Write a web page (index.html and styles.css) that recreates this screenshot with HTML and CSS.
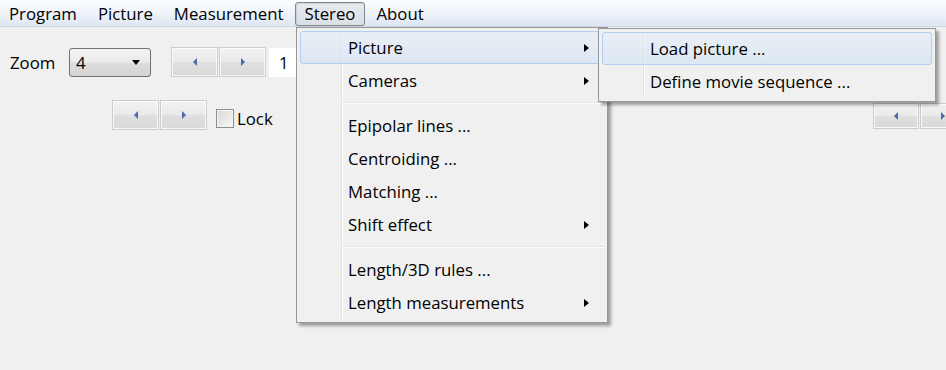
FILE: index.html
```html
<!DOCTYPE html>
<html lang="en">
<head>
    <meta charset="UTF-8">
    <title>Stereo</title>
    <link rel="stylesheet" href="styles.css">
</head>
<body>
    <div class="window">
        <nav class="menubar">
            <span class="menubar-item">Program</span>
            <span class="menubar-item">Picture</span>
            <span class="menubar-item">Measurement</span>
            <span class="menubar-item open">Stereo</span>
            <span class="menubar-item">About</span>
        </nav>

        <div class="toolbar">
            <div class="row row-zoom">
                <span class="zoom-label">Zoom</span>
                <div class="combo">
                    <span class="combo-value">4</span>
                    <span class="combo-arrow"></span>
                </div>
                <div class="spin">
                    <span class="spin-btn"><i class="tri tri-left"></i></span>
                    <span class="spin-btn"><i class="tri tri-right"></i></span>
                </div>
                <span class="num-box">1</span>
            </div>

            <div class="row row-lock">
                <div class="spin">
                    <span class="spin-btn"><i class="tri tri-left"></i></span>
                    <span class="spin-btn"><i class="tri tri-right"></i></span>
                </div>
                <label class="lock">
                    <span class="checkbox"></span>
                    <span>Lock</span>
                </label>
                <div class="spin spin-far">
                    <span class="spin-btn"><i class="tri tri-left"></i></span>
                    <span class="spin-btn"><i class="tri tri-right"></i></span>
                </div>
            </div>
        </div>

        <!-- Stereo dropdown -->
        <div class="popup stereo-menu">
            <div class="menu-item hot">Picture<span class="sub-arrow"></span></div>
            <div class="menu-item">Cameras<span class="sub-arrow"></span></div>
            <div class="menu-sep"></div>
            <div class="menu-item">Epipolar lines ...</div>
            <div class="menu-item">Centroiding ...</div>
            <div class="menu-item">Matching ...</div>
            <div class="menu-item">Shift effect<span class="sub-arrow"></span></div>
            <div class="menu-sep"></div>
            <div class="menu-item">Length/3D rules ...</div>
            <div class="menu-item">Length measurements<span class="sub-arrow"></span></div>
        </div>

        <!-- Stereo > Picture submenu -->
        <div class="popup picture-menu">
            <div class="menu-item hot">Load picture ...</div>
            <div class="menu-item">Define movie sequence ...</div>
        </div>
    </div>
</body>
</html>
```

FILE: styles.css
```css
* {
    box-sizing: border-box;
}

html, body {
    margin: 0;
    height: 100%;
}

body {
    background: #f0f0f0;
    font-family: "Open Sans", "Noto Sans", sans-serif;
    font-size: 16.8px;
    color: #000;
    overflow: hidden;
}

.window {
    position: relative;
    height: 370px;
}

/* Menu bar */
.menubar {
    display: flex;
    height: 27px;
    background: linear-gradient(#fcfdfe, #eef2f9 55%, #dde6f2);
    border-bottom: 1px solid #cfd6e1;
}

.menubar-item {
    margin: 2px 2px 0 0;
    height: 24px;
    padding: 0 9px 0 8px;
    line-height: 22px;
    border: 1px solid transparent;
    border-radius: 3px;
}

    .menubar-item.open {
        border-color: #80868d;
        background: linear-gradient(#e7eaef, #dae0e8);
        box-shadow: inset 1px 1px 1px rgba(0, 0, 0, 0.1);
    }

/* Toolbar controls */
.toolbar {
    padding: 20px 0 0 10px;
}

.row {
    display: flex;
}

.row-zoom {
    align-items: center;
    height: 30px;
}

.row-lock {
    align-items: flex-start;
    margin-top: 23px;
    padding-left: 102px;
}

.zoom-label {
    width: 59px;
}

.combo {
    display: flex;
    align-items: center;
    justify-content: space-between;
    width: 82px;
    height: 29px;
    margin-right: 20px;
    padding: 0 10px 0 6px;
    border: 1px solid #707070;
    border-radius: 3px;
    background: linear-gradient(#f3f3f3, #ebebeb 48%, #dedede 52%, #d2d2d2);
}

.combo-arrow {
    border-top: 5px solid #000;
    border-left: 4px solid transparent;
    border-right: 4px solid transparent;
}

.spin {
    display: flex;
    gap: 1px;
}

.spin-btn {
    display: flex;
    align-items: center;
    justify-content: center;
    width: 47px;
    height: 30px;
    border: 1px solid #cdcdcd;
    background: linear-gradient(#f2f2f2, #e9e9e9 50%, #dfdfdf 52%, #d9d9d9);
    box-shadow: inset 0 0 0 1px rgba(255, 255, 255, 0.75);
}

.tri {
    display: block;
    border-top: 4px solid transparent;
    border-bottom: 4px solid transparent;
}

.tri-left {
    border-right: 4px solid #4a6aae;
}

.tri-right {
    border-left: 4px solid #4a6aae;
}

.num-box {
    width: 40px;
    height: 29px;
    margin-left: 3px;
    padding-left: 10px;
    line-height: 29px;
    background: #fff;
}

.lock {
    display: flex;
    align-items: center;
    height: 19px;
    margin: 9px 0 0 9px;
    gap: 3px;
}

.checkbox {
    width: 18px;
    height: 19px;
    border: 1px solid #8e8f8f;
    background: linear-gradient(135deg, #d9d9d9, #f7f7f7);
    box-shadow: inset 0 0 0 1px #f4f4f4;
}

.spin-far {
    margin: 3px -20px 0 auto;
}

    .spin-far .spin-btn {
        height: 26px;
        width: 46px;
    }

/* Popup menus */
.popup {
    position: absolute;
    padding: 3px;
    border: 1px solid #979797;
    background: linear-gradient(to right, transparent 41px, #e2e3e3 41px, #e2e3e3 42px, #fff 42px, #fff 43px, transparent 43px) content-box no-repeat, #f0f0f0;
    box-shadow: 3px 3px 3px rgba(0, 0, 0, 0.35);
}

.stereo-menu {
    left: 296px;
    top: 27px;
    width: 312px;
}

.picture-menu {
    left: 598px;
    top: 28px;
    width: 338px;
}

.menu-item {
    display: flex;
    align-items: center;
    height: 33px;
    padding: 0 14px 0 47px;
    border: 1px solid transparent;
    border-radius: 3px;
}

    .menu-item.hot {
        border-color: #b2cff2;
        background: linear-gradient(rgba(226, 238, 252, 0.45), rgba(196, 220, 248, 0.45));
    }

.sub-arrow {
    margin-left: auto;
    border-left: 5px solid #000;
    border-top: 4.5px solid transparent;
    border-bottom: 4.5px solid transparent;
}

.menu-sep {
    margin: 5px 0 5px 42px;
    border-top: 1px solid #e2e3e3;
    border-bottom: 1px solid #fff;
}
```
